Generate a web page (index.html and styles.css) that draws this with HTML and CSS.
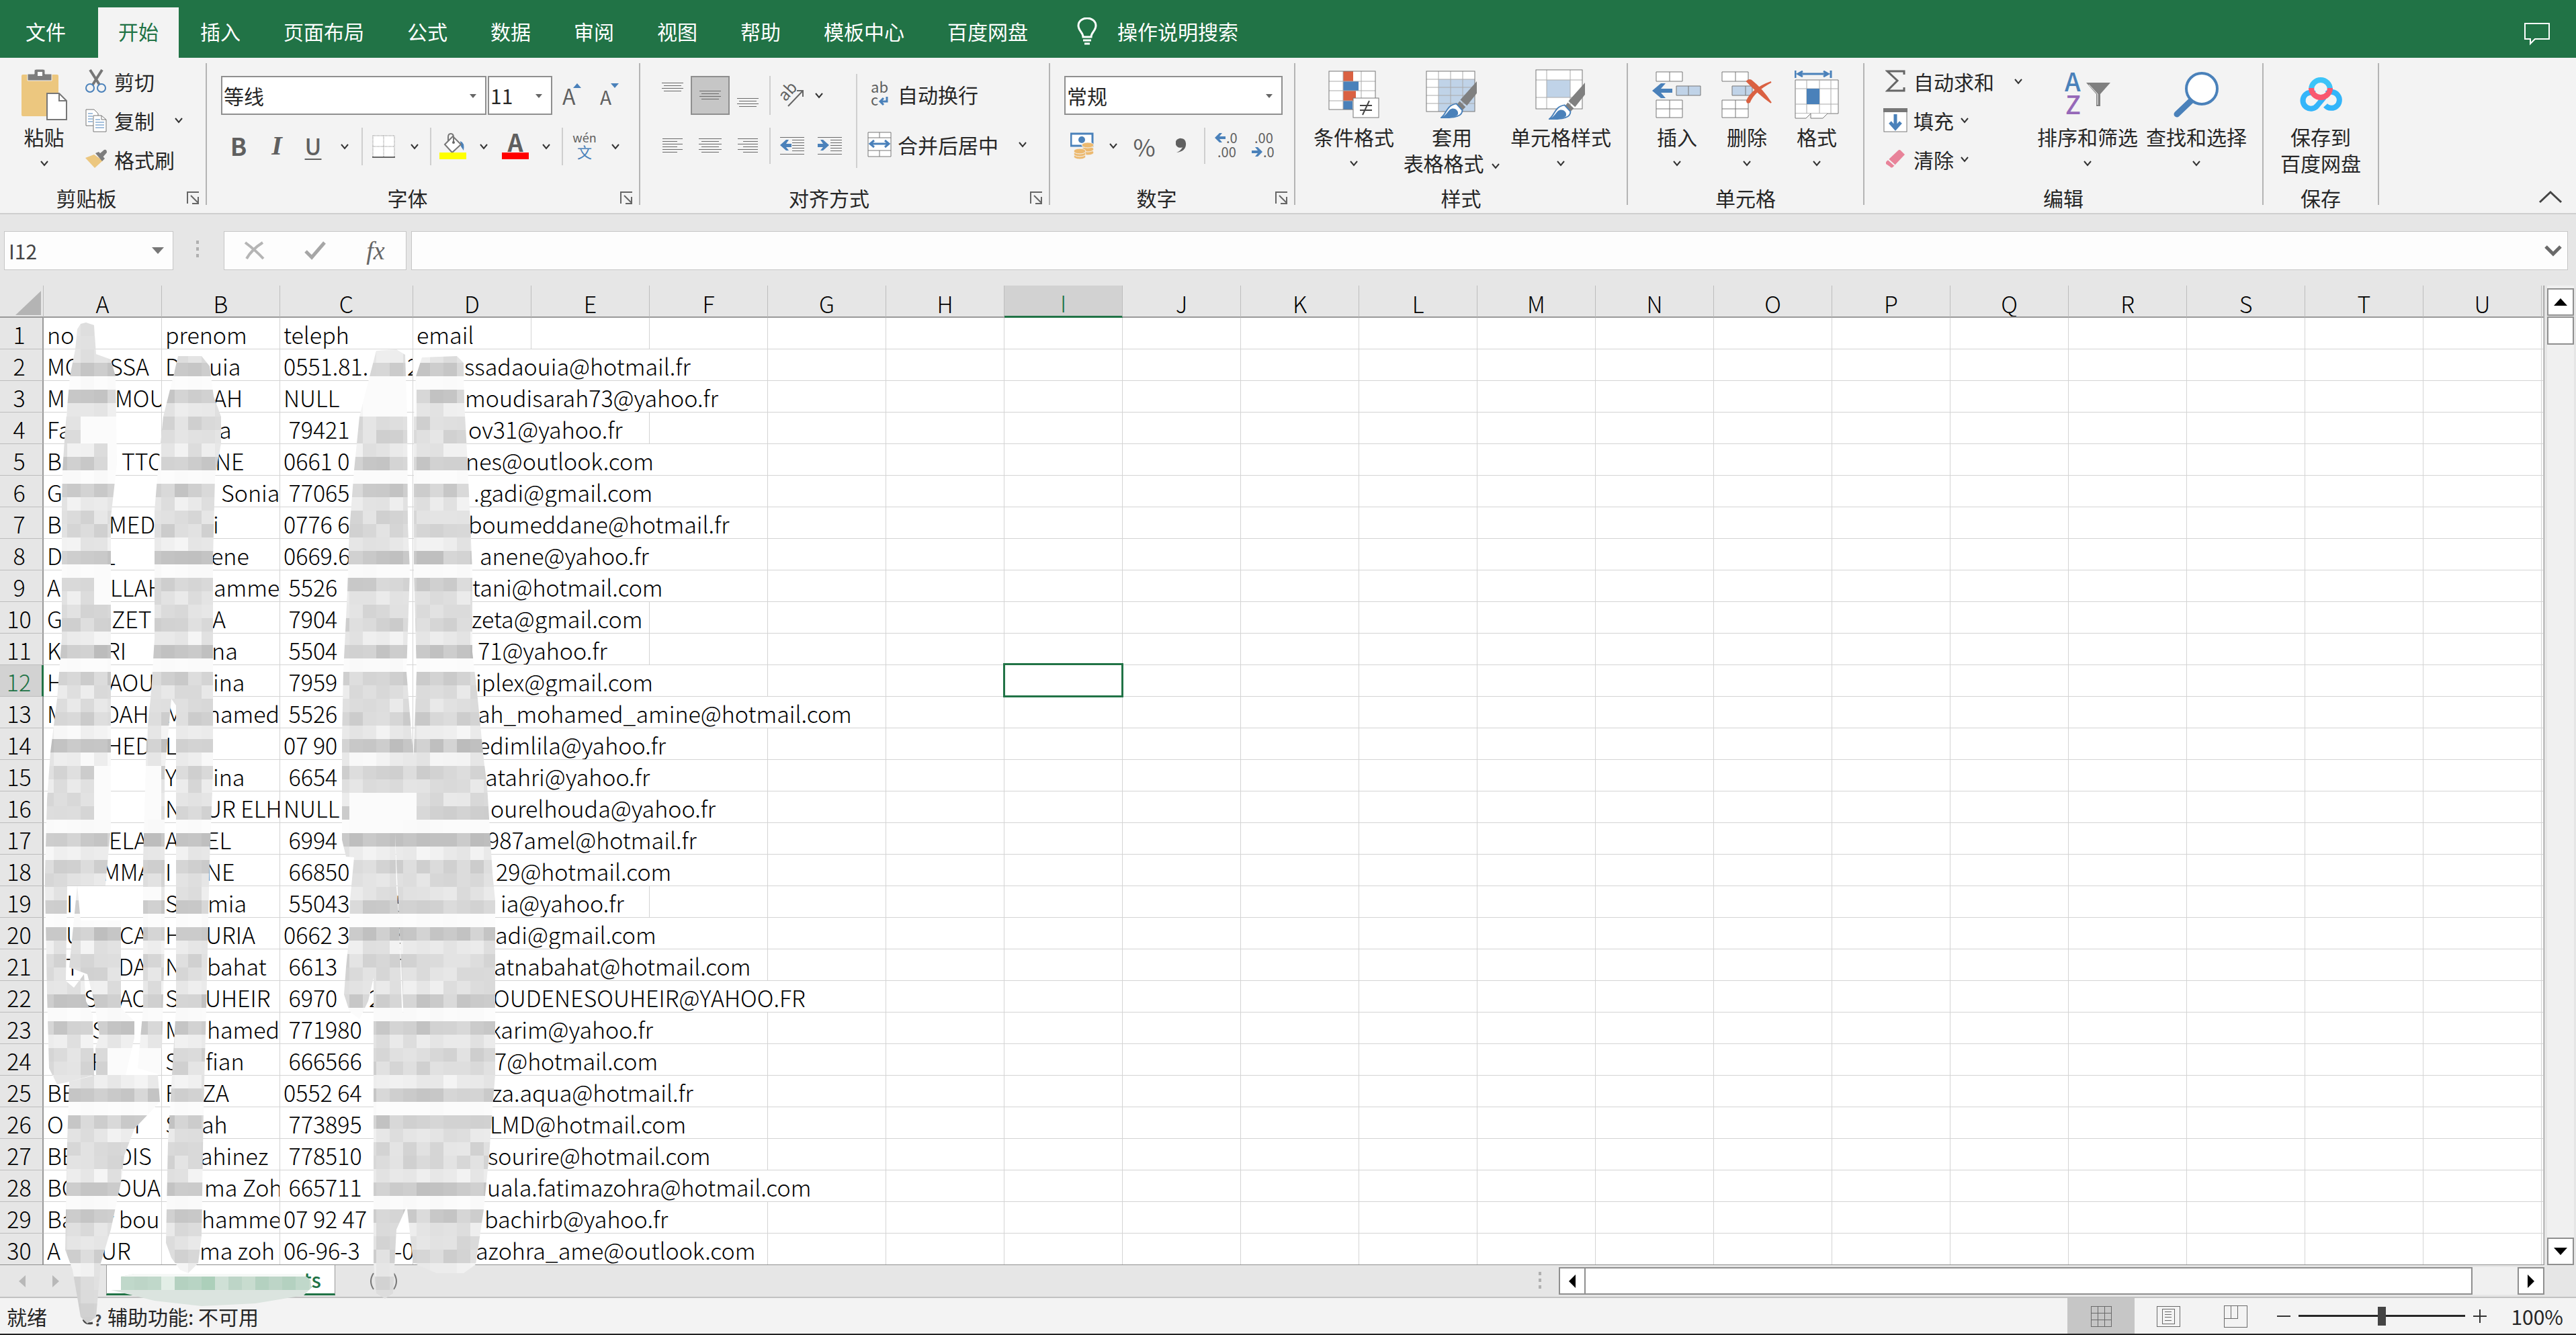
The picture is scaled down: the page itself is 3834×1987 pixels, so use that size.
FILE: index.html
```html
<!DOCTYPE html>
<html lang="zh-CN">
<head>
    <meta charset="UTF-8">
    <meta name="viewport" content="width=device-width, initial-scale=1.0">
    <title>Excel</title>
    <link rel="stylesheet" href="styles.css">
</head>
<body>
    <svg class="defs" aria-hidden="true">
        <symbol id="chev" viewBox="0 0 14 10"><path d="M2 2L7 8L12 2" fill="none" stroke="#333" stroke-width="2"/></symbol>
        <symbol id="launch" viewBox="0 0 20 20"><path d="M1 18V1H18M6 6L17 17M17 8V18H8" fill="none" stroke="#666" stroke-width="2"/></symbol>
        <symbol id="brush" viewBox="0 0 56 56">
            <path d="M55 0V18L40 37L30 28Z" fill="#808080"/>
            <path d="M29 30L38 39L33 44L25 35Z" fill="#808080"/>
            <path d="M24 34L33 44C33 52 24 56 1 55C9 50 9 36 24 34Z" fill="#fff" stroke="#4a81ba" stroke-width="2"/>
            <path d="M14 43C20 38 29 44 26 51C22 55 12 55 1 55C8 52 10 47 14 43Z" fill="#4a81ba"/>
        </symbol>
    </svg>

    <nav class="tabs">
        <button class="tab file">文件</button>
        <button class="tab active">开始</button>
        <button class="tab">插入</button>
        <button class="tab">页面布局</button>
        <button class="tab">公式</button>
        <button class="tab">数据</button>
        <button class="tab">审阅</button>
        <button class="tab">视图</button>
        <button class="tab">帮助</button>
        <button class="tab">模板中心</button>
        <button class="tab">百度网盘</button>
        <button class="tab tell">
            <svg width="30" height="42" viewBox="0 0 30 42"><path d="M9 29C9 22 2 20 2 12A13 11 0 0 1 28 12C28 20 21 22 21 29ZM9 34H21M11 39H19" fill="none" stroke="#fff" stroke-width="3"/></svg>
            操作说明搜索
        </button>
        <button class="comment" aria-label="批注">
            <svg width="38" height="34" viewBox="0 0 38 34"><path d="M1 1H37V24H16L9 31V24H1Z" fill="none" stroke="#fff" stroke-width="2"/></svg>
        </button>
    </nav>

    <div class="ribbon">
        <section class="group clipboard">
            <div class="group-body">
                <button class="big">
                    <span class="pic"><svg width="68" height="76" viewBox="39 105 68 76">
                        <rect x="39" y="113" width="55" height="62" rx="2" fill="#ecc77f"/>
                        <path d="M48 122V112H58V107Q58 105 61 105H71Q74 105 74 107V112H84V122Z" fill="#7d7d7d" stroke="#f3f3f3"/>
                        <rect x="63" y="109" width="7" height="6" fill="#fff"/>
                        <path d="M77 141H95L106 152V180H77Z" fill="#fff" stroke="#777" stroke-width="2"/>
                        <path d="M95 141V152H106" fill="none" stroke="#777" stroke-width="2"/>
                    </svg></span>
                    <span>粘贴</span>
                    <svg class="chev"><use href="#chev"/></svg>
                </button>
                <div class="stack">
                    <button class="small"><span class="ico"><svg width="32" height="36" viewBox="129 103 32 36">
                        <path d="M136 104L150 126M154 104L140 126" stroke="#777" stroke-width="4" fill="none"/>
                        <circle cx="136" cy="131" r="6" fill="#f3f3f3" stroke="#4a81ba" stroke-width="2"/><circle cx="153" cy="131" r="6" fill="#f3f3f3" stroke="#4a81ba" stroke-width="2"/>
                    </svg></span>剪切</button>
                    <button class="small"><span class="ico"><svg width="32" height="36" viewBox="129 160 32 36">
                        <path d="M130 162H142L148 168V186H130Z" fill="#fff" stroke="#777"/>
                        <path d="M133 168H140M133 172H140M133 176H140M133 180H140" stroke="#4a81ba" stroke-width="1"/>
                        <path d="M141 171H153L160 177V195H141Z" fill="#fff" stroke="#777"/>
                        <path d="M153 171V177H160" fill="none" stroke="#777"/>
                        <path d="M144 177H151M144 181H157M144 185H157M144 189H157" stroke="#4a81ba" stroke-width="1"/>
                    </svg></span>复制<svg class="chev far"><use href="#chev"/></svg></button>
                    <button class="small"><span class="ico"><svg width="34" height="30" viewBox="128 223 34 30">
                        <path d="M129 236L142 231L155 240L143 251Z" fill="#ecc77f"/>
                        <path d="M144 229L149 227L158 237L154 241Z" fill="#7d7d7d"/><path d="M150 230L157 224Q161 223 161 228L155 235Z" fill="#7d7d7d"/>
                    </svg></span>格式刷</button>
                </div>
            </div>
            <div class="group-label">剪贴板</div>
            <button class="launch" aria-label="剪贴板设置"><svg width="20" height="20"><use href="#launch"/></svg></button>
        </section>

        <section class="group font">
            <div class="group-body rows">
                <div class="row">
                    <div class="combo name"><select aria-label="字体"><option>等线</option></select></div>
                    <div class="combo size"><select aria-label="字号"><option>11</option></select></div>
                    <button class="tool grow" aria-label="增大字号"><svg width="34" height="40" viewBox="0 0 34 40"><text x="4" y="34" class="t-icon" font-size="32">A</text><path d="M20 9L26 2L32 9Z" fill="#4a81ba"/></svg></button>
                    <button class="tool grow" aria-label="减小字号"><svg width="34" height="40" viewBox="0 0 34 40"><text x="4" y="34" class="t-icon" font-size="28">A</text><path d="M20 2H32L26 9Z" fill="#4a81ba"/></svg></button>
                </div>
                <div class="row font-tools">
                    <button class="tool bold">B</button>
                    <button class="tool italic">I</button>
                    <button class="tool under">U</button>
                    <button class="tool" aria-label="下划线选项"><svg class="chev"><use href="#chev"/></svg></button>
                    <i class="sep"></i>
                    <button class="tool" aria-label="边框"><svg width="34" height="34" viewBox="0 0 34 34"><rect x="1" y="1" width="32" height="32" fill="#fff"/><path d="M1 1H33V33M1 1V33M17 1V33M1 17H33" fill="none" stroke="#777" stroke-width="1" stroke-dasharray="1 1"/><path d="M0 33H34" stroke="#666" stroke-width="2"/></svg></button>
                    <button class="tool" aria-label="边框选项"><svg class="chev"><use href="#chev"/></svg></button>
                    <i class="sep"></i>
                    <button class="tool" aria-label="填充颜色"><svg width="40" height="40" viewBox="0 0 40 40"><path d="M31 12Q38 14 36 26L32 20Z" fill="#4a81ba"/><path d="M8 17L20 5L32 17L19 29Z" fill="#fff" stroke="#777" stroke-width="2"/><path d="M13 12V6Q13 1 17 1T21 6V13" fill="none" stroke="#777" stroke-width="2"/><circle cx="21" cy="14" r="2" fill="#666"/><rect y="29" width="40" height="10" fill="#ff0"/></svg></button>
                    <button class="tool" aria-label="填充选项"><svg class="chev"><use href="#chev"/></svg></button>
                    <button class="tool" aria-label="字体颜色"><svg width="40" height="40" viewBox="0 0 40 40"><text x="20" y="28" text-anchor="middle" class="t-icon" font-size="36" font-weight="bold">A</text><rect y="29" width="40" height="10" fill="#f00"/></svg></button>
                    <button class="tool" aria-label="颜色选项"><svg class="chev"><use href="#chev"/></svg></button>
                    <i class="sep"></i>
                    <button class="tool" aria-label="拼音"><svg width="40" height="42" viewBox="0 0 40 42"><text x="20" y="15" text-anchor="middle" class="t-icon" font-size="18">wén</text><text x="20" y="38" text-anchor="middle" class="t-blue" font-size="22">文</text></svg></button>
                    <button class="tool" aria-label="拼音选项"><svg class="chev"><use href="#chev"/></svg></button>
                </div>
            </div>
            <div class="group-label">字体</div>
            <button class="launch" aria-label="字体设置"><svg width="20" height="20"><use href="#launch"/></svg></button>
        </section>

        <section class="group align">
            <div class="group-body">
                <div class="rows">
                    <div class="row align-top">
                        <button class="tool" aria-label="顶端对齐"><svg width="32" height="40"><path d="M0 1H32M3 5H29M0 9H32M3 13H29" class="ln thin"/></svg></button>
                        <button class="tool pressed" aria-label="垂直居中"><svg width="32" height="40"><path d="M0 13H32M3 17H29M0 21H32M3 25H29" class="ln thin"/></svg></button>
                        <button class="tool" aria-label="底端对齐"><svg width="32" height="40"><path d="M0 24H32M3 28H29M0 32H32M3 36H29" class="ln thin"/></svg></button>
                        <i class="sep"></i>
                        <button class="tool" aria-label="方向"><svg width="40" height="40" viewBox="0 0 40 40"><text x="10" y="30" class="t-icon" font-size="24" transform="rotate(-48 10 30)">ab</text><path d="M14 36L36 13M27 13H36V22" fill="none" stroke="#666" stroke-width="2"/></svg></button>
                        <button class="tool" aria-label="方向选项"><svg class="chev"><use href="#chev"/></svg></button>
                    </div>
                    <div class="row align-low">
                        <button class="tool" aria-label="左对齐"><svg width="30" height="26"><path d="M0 2H30M0 6H22M0 10H30M0 14H22M0 18H30M0 22H22" class="ln thin"/></svg></button>
                        <button class="tool" aria-label="居中"><svg width="34" height="26"><path d="M0 2H34M4 6H30M0 10H34M4 14H30M0 18H34M4 22H30" class="ln thin"/></svg></button>
                        <button class="tool" aria-label="右对齐"><svg width="30" height="26"><path d="M0 2H30M8 6H30M0 10H30M8 14H30M0 18H30M8 22H30" class="ln thin"/></svg></button>
                        <i class="sep"></i>
                        <button class="tool" aria-label="减少缩进"><svg width="36" height="30"><path d="M0 2H36M18 6H36M18 10H36M18 14H36M18 18H36M18 22H36M0 27H36" class="ln thin"/><path d="M0 14L9 6H13L9 12H17V17H9L13 22H9Z" fill="#4a81ba"/></svg></button>
                        <button class="tool" aria-label="增加缩进"><svg width="36" height="30"><path d="M0 2H36M19 6H36M19 10H36M19 14H36M19 18H36M19 22H36M0 27H36" class="ln thin"/><path d="M17 14L8 6H4L8 12H0V17H8L4 22H8Z" fill="#4a81ba"/></svg></button>
                    </div>
                </div>
                <i class="sep tall"></i>
                <div class="rows">
                    <button class="row small"><span class="ico"><svg width="30" height="40" viewBox="0 0 30 40"><text x="2" y="18" class="t-icon" font-size="22">ab</text><text x="2" y="37" class="t-icon" font-size="22">c</text><path d="M26 24V31H17M21 26L16 31L21 36" fill="none" stroke="#4a81ba" stroke-width="3"/></svg></span>自动换行</button>
                    <button class="row small low"><span class="ico"><svg width="36" height="38" viewBox="0 0 36 38"><path d="M1 1H35V37H1ZM18 1V9M18 28V37M1 9H35M1 28H35" fill="#fff" stroke="#777" stroke-width="1"/><path d="M4 18H32M10 13L4 18L10 23M26 13L32 18L26 23" fill="none" stroke="#4a81ba" stroke-width="3"/></svg></span>合并后居中<svg class="chev far"><use href="#chev"/></svg></button>
                </div>
            </div>
            <div class="group-label">对齐方式</div>
            <button class="launch" aria-label="对齐设置"><svg width="20" height="20"><use href="#launch"/></svg></button>
        </section>

        <section class="group number">
            <div class="group-body rows">
                <div class="row"><div class="combo format"><select aria-label="数字格式"><option>常规</option></select></div></div>
                <div class="row number-tools">
                    <button class="tool" aria-label="货币"><svg width="36" height="40" viewBox="0 0 36 40"><rect x="1" y="2" width="32" height="18" fill="#fff" stroke="#4a81ba" stroke-width="3"/><ellipse cx="17" cy="11" rx="5" ry="5" fill="#4a81ba"/><g fill="#ecb96f" stroke="#f3f3f3"><ellipse cx="26" cy="30" rx="9" ry="4"/><ellipse cx="26" cy="25" rx="9" ry="4"/><ellipse cx="26" cy="19" rx="9" ry="4"/><ellipse cx="14" cy="36" rx="9" ry="4"/><ellipse cx="14" cy="32" rx="9" ry="4"/><ellipse cx="14" cy="28" rx="9" ry="4"/></g></svg></button>
                    <button class="tool" aria-label="货币选项"><svg class="chev"><use href="#chev"/></svg></button>
                    <button class="tool percent">%</button>
                    <button class="tool" aria-label="千位分隔"><svg width="16" height="24"><path d="M8 1A7 7 0 1 0 10 14Q8 19 1 22Q16 20 15 8Q14 1 8 1Z" fill="#606060"/></svg></button>
                    <i class="sep"></i>
                    <button class="tool" aria-label="增加小数位"><svg width="38" height="40" viewBox="0 0 38 40"><text x="18" y="16" class="t-icon" font-size="20">.0</text><text x="5" y="37" class="t-icon" font-size="20">.00</text><path d="M1 8L8 1H12L8 6H17V10H8L12 15H8Z" fill="#4a81ba"/></svg></button>
                    <button class="tool" aria-label="减少小数位"><svg width="38" height="40" viewBox="0 0 38 40"><text x="5" y="16" class="t-icon" font-size="20">.00</text><text x="18" y="37" class="t-icon" font-size="20">.0</text><path d="M17 29L10 22H6L10 27H1V31H10L6 36H10Z" fill="#4a81ba"/></svg></button>
                </div>
            </div>
            <div class="group-label">数字</div>
            <button class="launch" aria-label="数字设置"><svg width="20" height="20"><use href="#launch"/></svg></button>
        </section>

        <section class="group styles">
            <div class="group-body">
                <button class="big w-cond">
                    <span class="pic"><svg width="76" height="72" viewBox="0 0 76 72">
                        <rect x="1" y="1" width="69" height="57" fill="#fff"/>
                        <rect x="22" y="1" width="15" height="15" fill="#da6142"/><rect x="22" y="16" width="23" height="14" fill="#4a81ba"/><rect x="22" y="30" width="19" height="15" fill="#da6142"/><rect x="22" y="45" width="14" height="13" fill="#4a81ba"/>
                        <path d="M1 16H70M1 30H70M1 45H70M22 1V58M49 1V58" stroke="#aaa"/><rect x="1" y="1" width="69" height="57" fill="none" stroke="#777"/>
                        <rect x="37" y="41" width="38" height="29" fill="#fff" stroke="#777"/><path d="M47 52H65M47 59H65M61 45L51 66" stroke="#444" stroke-width="2"/>
                    </svg></span>
                    <span>条件格式</span>
                    <svg class="chev"><use href="#chev"/></svg>
                </button>
                <button class="big w-table">
                    <span class="pic"><svg width="78" height="72" viewBox="0 0 78 72">
                        <rect x="1" y="1" width="72" height="60" fill="#fff"/><rect x="19" y="13" width="54" height="48" fill="#c0d3e8"/>
                        <path d="M1 13H73M1 25H73M1 37H73M1 49H73M19 1V61M37 1V61M55 1V61" stroke="#aaa"/><rect x="1" y="1" width="72" height="60" fill="none" stroke="#777"/>
                        <use href="#brush" x="22" y="16" width="55" height="55"/>
                    </svg></span>
                    <span>套用</span>
                    <span>表格格式 <svg class="chev"><use href="#chev"/></svg></span>
                </button>
                <button class="big w-cell">
                    <span class="pic"><svg width="76" height="76" viewBox="0 0 76 76">
                        <rect x="1" y="1" width="69" height="58" fill="#fff"/><rect x="17" y="16" width="35" height="26" fill="#c0d3e8"/>
                        <path d="M1 16H70M1 42H70M17 1V59M52 1V59" stroke="#aaa"/><rect x="1" y="1" width="69" height="58" fill="none" stroke="#777"/>
                        <use href="#brush" x="20" y="20" width="55" height="55"/>
                    </svg></span>
                    <span>单元格样式</span>
                    <svg class="chev"><use href="#chev"/></svg>
                </button>
            </div>
            <div class="group-label">样式</div>
        </section>

        <section class="group cells">
            <div class="group-body">
                <button class="big w-op">
                    <span class="pic"><svg width="74" height="70" viewBox="0 0 74 70">
                        <path d="M6 1H45V15H6ZM26 1V15M6 43H45V69H6ZM26 43V69M6 56H45" fill="#fff" stroke="#777"/>
                        <path d="M36 22H72V36H36ZM54 22V36" fill="#c0d3e8" stroke="#777"/>
                        <path d="M0 29L13 18H20L13 26H30V32H13L20 40H13Z" fill="#4a81ba"/>
                    </svg></span>
                    <span>插入</span>
                    <svg class="chev"><use href="#chev"/></svg>
                </button>
                <button class="big w-op">
                    <span class="pic"><svg width="76" height="70" viewBox="0 0 76 70">
                        <path d="M1 1H40V15H1ZM21 1V15M1 43H40V69H1ZM21 43V69M1 56H40" fill="#fff" stroke="#777"/>
                        <path d="M16 22H46V36H16ZM36 22V36" fill="#c0d3e8" stroke="#777"/>
                        <path d="M38 15Q42 11 46 15Q60 26 74 47Q56 34 38 15ZM74 16Q48 30 42 46Q38 48 38 44Q46 26 74 16Z" fill="#da6142" stroke="#da6142" stroke-width="2"/>
                    </svg></span>
                    <span>删除</span>
                    <svg class="chev"><use href="#chev"/></svg>
                </button>
                <button class="big w-op">
                    <span class="pic"><svg width="66" height="74" viewBox="0 0 66 74">
                        <path d="M1 1V12M54 1V12M6 6H49M12 2L5 6L12 10M43 2L50 6L43 10" fill="none" stroke="#4a81ba" stroke-width="3"/>
                        <path d="M1 15H65V65H1Z" fill="#fff" stroke="#777"/><path d="M1 28H65M1 51H65M18 15V65M37 15V65M54 15V65" stroke="#aaa"/>
                        <rect x="18" y="28" width="19" height="23" fill="#4a81ba"/><path d="M1 65V72H17L24 65M24 65V72H42L49 65" fill="#fff" stroke="#777"/>
                    </svg></span>
                    <span>格式</span>
                    <svg class="chev"><use href="#chev"/></svg>
                </button>
            </div>
            <div class="group-label">单元格</div>
        </section>

        <section class="group edit">
            <div class="group-body">
                <div class="stack">
                    <button class="small"><span class="ico"><svg width="30" height="34"><path d="M28 7V2H3L18 16L3 31H28V26" fill="none" stroke="#666" stroke-width="3"/></svg></span>自动求和<svg class="chev far"><use href="#chev"/></svg></button>
                    <button class="small"><span class="ico"><svg width="36" height="36"><rect x="1" y="1" width="34" height="34" fill="#fff" stroke="#777"/><rect width="36" height="6" fill="#777"/><path d="M18 9V29M10 21L18 30L26 21" fill="none" stroke="#4a81ba" stroke-width="5"/></svg></span>填充<svg class="chev"><use href="#chev"/></svg></button>
                    <button class="small"><span class="ico"><svg width="30" height="30"><path d="M1 19L19 2Q21 0 23 2L29 8L12 26Q9 29 7 26L1 22Z" fill="#e88399"/><path d="M4 15L14 24" stroke="#f3f3f3" stroke-width="2"/></svg></span>清除<svg class="chev"><use href="#chev"/></svg></button>
                </div>
                <button class="big w-find">
                    <span class="pic"><svg width="68" height="66" viewBox="0 0 68 66"><text x="0" y="28" class="t-blue" font-size="38" font-weight="500">A</text><text x="1" y="62" fill="#9668b8" font-size="38" font-weight="500">Z</text><path d="M32 15H68L53 32V50H47V32Z" fill="#808080"/><path d="M36 18L49 32V48" fill="none" stroke="#fff"/></svg></span>
                    <span>排序和筛选</span>
                    <svg class="chev"><use href="#chev"/></svg>
                </button>
                <button class="big w-find">
                    <span class="pic"><svg width="68" height="70" viewBox="0 0 68 70"><path d="M28 42L5 64" stroke="#4a81ba" stroke-width="9" stroke-linecap="round"/><circle cx="42" cy="26" r="23" fill="#fff" stroke="#4a81ba" stroke-width="4"/></svg></span>
                    <span>查找和选择</span>
                    <svg class="chev"><use href="#chev"/></svg>
                </button>
            </div>
            <div class="group-label">编辑</div>
        </section>

        <section class="group save">
            <div class="group-body">
                <button class="big">
                    <span class="pic"><svg width="66" height="56" viewBox="0 0 66 56" fill="none" stroke-width="8"><path d="M38 32L28 44A12 12 0 1 1 24 26M40 44A12 12 0 1 0 42 26" stroke="#33b5fa"/><path d="M19 20A14 14 0 0 1 47 20" stroke="#3cc4f8"/><path d="M47 18A14 14 0 1 1 19 18" stroke="#f9586f"/></svg></span>
                    <span>保存到</span>
                    <span>百度网盘</span>
                </button>
            </div>
            <div class="group-label">保存</div>
        </section>
        <button class="collapse" aria-label="折叠功能区"><svg width="36" height="20"><path d="M2 18L18 3L34 18" fill="none" stroke="#444" stroke-width="3"/></svg></button>
    </div>

    <div class="formula-bar">
        <div class="combo-name"><input type="text" value="I12" aria-label="名称框"></div>
        <i class="dots"></i>
        <div class="fx">
            <button aria-label="取消"><svg width="32" height="28"><path d="M2 2Q18 14 29 26M28 2Q12 12 4 26" fill="none" stroke="#b5b5b5" stroke-width="4"/></svg></button>
            <button aria-label="输入"><svg width="32" height="28"><path d="M2 15L11 24L30 2" fill="none" stroke="#a6a6a6" stroke-width="5"/></svg></button>
            <button class="fn">fx</button>
        </div>
        <div class="formula"><input type="text" aria-label="编辑栏"><svg width="26" height="18"><path d="M2 3L13 14L24 3" fill="none" stroke="#6a6a6a" stroke-width="5"/></svg></div>
    </div>

    <main class="workbook">
        <div class="grid"><table id="sheet"></table></div>
        <div class="vscroll">
            <button aria-label="向上"><svg width="20" height="12"><path d="M0 11L10 0L20 11Z"/></svg></button>
            <div class="vthumb"></div>
            <button class="end" aria-label="向下"><svg width="20" height="12"><path d="M0 0L10 11L20 0Z"/></svg></button>
        </div>
    </main>

    <div class="sheet-bar">
        <button class="nav" aria-label="上一张"><svg width="10" height="18"><path d="M10 0L0 9L10 18Z"/></svg></button>
        <button class="nav" aria-label="下一张"><svg width="10" height="18"><path d="M0 0L10 9L0 18Z"/></svg></button>
        <button class="sheet-tab">ts</button>
        <button class="add" aria-label="新工作表"><svg width="44" height="32"><path d="M6 4Q-2 16 6 28M36 4Q44 16 36 28" fill="none" stroke="#777" stroke-width="2"/></svg></button>
        <i class="dots"></i>
        <div class="hscroll">
            <button aria-label="向左"><svg width="10" height="20"><path d="M10 0L0 10L10 20Z"/></svg></button>
            <div class="hthumb"></div>
            <button class="end" aria-label="向右"><svg width="10" height="20"><path d="M0 0L10 10L0 20Z"/></svg></button>
        </div>
    </div>

    <footer class="status">
        <span>就绪</span>
        <span class="access"><svg width="34" height="34"><path d="M2 22Q6 30 16 27" fill="none" stroke="#444" stroke-width="3"/><text x="18" y="32" font-size="22" font-weight="bold" fill="#444">?</text></svg>辅助功能: 不可用</span>
        <div class="views">
            <button class="on" aria-label="普通"><svg width="32" height="32"><path d="M1 1H31V31H1ZM11 1V31M21 1V31M1 11H31M1 21H31" class="ln thin"/></svg></button>
            <button aria-label="页面布局"><svg width="36" height="32"><path d="M1 1H35V31H1ZM9 5H27V27H9ZM13 9H23M13 13H23M13 17H23M13 22H23" class="ln thin"/></svg></button>
            <button aria-label="分页预览"><svg width="36" height="34"><path d="M1 1H35V33H1ZM1 20H21V1M11 1V20" class="ln thin"/></svg></button>
        </div>
        <button class="zoom-btn" aria-label="缩小"><svg width="20" height="20"><path d="M0 10H20" stroke="#333" stroke-width="2"/></svg></button>
        <input type="range" min="0" max="100" value="50" aria-label="缩放">
        <button class="zoom-btn" aria-label="放大"><svg width="20" height="20"><path d="M0 10H20M10 0V20" stroke="#333" stroke-width="2"/></svg></button>
        <span class="percent-label">100%</span>
    </footer>

    <svg class="mosaic" id="mosaic" aria-hidden="true"></svg>
    <script src="sheet.js"></script>
</body>
</html>
```
FILE: styles.css
```css
* {
    box-sizing: border-box;
}

html, body {
    height: 100%;
    margin: 0;
}

body {
    position: relative;
    display: flex;
    flex-direction: column;
    overflow: hidden;
    background: #e6e6e6;
    color: #262626;
    font-family: "Noto Sans CJK SC", sans-serif;
    font-size: 30px;
}

button, input, select {
    margin: 0;
    padding: 0;
    border: none;
    background: none;
    color: inherit;
    font: inherit;
}

svg {
    display: block;
    flex: none;
}

.defs {
    position: absolute;
    width: 0;
    height: 0;
}

/* tabs */
.tabs {
    display: flex;
    align-items: flex-end;
    height: 86px;
    flex: none;
    background: #217346;
    color: #fff;
}

.tab {
    height: 75px;
    padding: 0 32px 4px;
    line-height: 71px;
    white-space: nowrap;
}

.tab.file {
    width: 146px;
    padding: 0 48px 4px 38px;
}

.tab.active {
    padding: 0 30px 4px;
    background: #f3f3f3;
    color: #217346;
}

.tab.tell {
    display: flex;
    align-items: center;
    gap: 30px;
    margin-left: 9px;
}

.comment {
    margin: 0 39px 18px auto;
}

/* ribbon */
.ribbon {
    display: flex;
    flex: none;
    height: 233px;
    padding: 8px 0 12px;
    background: #f3f3f3;
    border-bottom: 2px solid #cfcfcf;
}

.group {
    position: relative;
    flex: none;
    padding-left: 21px;
    border-right: 2px solid #b4b4b4;
}

.group-body {
    display: flex;
    height: 180px;
}

.group-label {
    height: 33px;
    margin-left: -21px;
    padding-right: 46px;
    line-height: 40px;
    text-align: center;
}

.clipboard { width: 308px; padding-left: 18px; }
.font { width: 645px; }
.align { width: 610px; }
.number { width: 365px; }
.styles { width: 495px; }
.cells { width: 352px; }
.edit { width: 594px; }
.save { width: 172px; padding-left: 0; }

.styles .group-label,
.cells .group-label,
.edit .group-label {
    padding-right: 0;
}

.save .group-label {
    margin-left: 0;
    padding-right: 0;
}

.launch {
    position: absolute;
    right: 8px;
    bottom: 0;
}

.chev {
    display: inline-block;
    width: 14px;
    height: 10px;
    flex: none;
}

.big {
    display: flex;
    flex-direction: column;
    align-items: center;
    width: 95px;
    line-height: 39px;
    white-space: nowrap;
}

.big .pic {
    display: flex;
    align-items: center;
    justify-content: center;
    height: 90px;
    padding-top: 4px;
}

.big > .chev {
    margin-top: 15px;
}

.big span .chev {
    margin-left: 4px;
    vertical-align: middle;
}

.w-cond { width: 132px; }
.w-table { width: 160px; }
.w-cell { width: 164px; }
.w-op { width: 104px; }
.w-find { width: 162px; }
.save .big { width: 100%; }

.stack {
    display: flex;
    flex-direction: column;
    padding-left: 12px;
}

.small {
    display: flex;
    align-items: center;
    gap: 9px;
    height: 58px;
    padding-bottom: 4px;
    white-space: nowrap;
}

.small .ico {
    display: flex;
    justify-content: center;
    width: 36px;
}

.small .far {
    margin-left: 20px;
}

.edit .stack {
    width: 230px;
    padding-left: 7px;
}

.rows {
    display: flex;
    flex-direction: column;
    gap: 19px;
    padding-top: 19px;
}

.row {
    display: flex;
    flex: none;
    height: 58px;
}

.font-tools,
.align-low,
.align-top,
.number-tools {
    display: grid;
    height: 54px;
}

.align-top { grid-template-columns: 54px 58px 54px 12px 54px 26px; height: 58px; }
.align-low { grid-template-columns: 54px 58px 54px 12px 54px 58px; }
.font-tools { grid-template-columns: 52px 62px 46px 48px 4px 60px 32px 16px 50px 42px 52px 40px 8px 58px 34px; }
.number-tools { grid-template-columns: 54px 38px 54px 56px 14px 52px 58px; }

.low {
    height: 54px;
}

.tool {
    display: flex;
    align-items: center;
    justify-content: center;
    color: #5f5f5f;
}

.pressed {
    background: #c6c6c6;
    border: 2px solid #8f8f8f;
}

.bold {
    padding-bottom: 4px;
    font-size: 36px;
    font-weight: bold;
}

.italic {
    padding-bottom: 4px;
    font-family: "Liberation Serif", serif;
    font-size: 40px;
    font-style: italic;
    font-weight: bold;
}

.under {
    padding-bottom: 4px;
    font-size: 34px;
    font-weight: 500;
    text-decoration: underline;
    text-decoration-thickness: 2px;
    text-underline-offset: 5px;
}

.percent {
    font-size: 36px;
}

.grow {
    width: 56px;
}

.sep {
    width: 2px;
    justify-self: center;
    background: #cfcfcf;
}

.sep.tall {
    height: 140px;
    margin: 16px 15px 0 10px;
}

.combo {
    position: relative;
    height: 58px;
    border: 2px solid #8f8f8f;
    background: #fff;
}

.combo select {
    width: 100%;
    height: 100%;
    padding-left: 2px;
    appearance: none;
    color: #262626;
}

.combo::after {
    content: "";
    position: absolute;
    right: 13px;
    top: 25px;
    border: 5px solid transparent;
    border-top: 6px solid #666;
    border-bottom: none;
}

.combo.name { width: 395px; }
.combo.size { width: 96px; margin-left: 2px; }
.combo.format { width: 325px; }

.collapse {
    align-self: flex-end;
    margin: 0 20px 2px auto;
}

.t-icon { fill: #5f5f5f; }
.t-blue { fill: #4a81ba; }

.ln {
    fill: none;
    stroke: #6a6a6a;
    stroke-width: 2px;
    shape-rendering: crispEdges;
}

.ln.thin {
    stroke-width: 1px;
}

/* formula bar */
.formula-bar {
    display: flex;
    flex: none;
    height: 106px;
    padding: 25px 12px 23px 6px;
}

.combo-name, .fx, .formula {
    display: flex;
    align-items: center;
    border: 1px solid #c6c6c6;
    background: #fdfdfd;
}

.combo-name {
    width: 252px;
    padding: 0 13px 0 6px;
}

.combo-name input {
    width: 100%;
    min-width: 0;
    color: #444;
}

.combo-name::after {
    content: "";
    border: 9px solid transparent;
    border-top: 10px solid #777;
    border-bottom: none;
}

.dots {
    width: 4px;
    height: 28px;
    background: repeating-linear-gradient(#b0b0b0 0 5px, transparent 5px 10px);
}

.formula-bar .dots {
    margin: 14px 37px 0 34px;
}

.fx {
    width: 272px;
}

.fx button {
    display: flex;
    align-items: center;
    justify-content: center;
    width: 90px;
    height: 100%;
}

.fx .fn {
    color: #666;
    font-family: "Liberation Serif", serif;
    font-size: 38px;
    font-style: italic;
}

.formula {
    flex: 1;
    margin-left: 7px;
    padding-right: 8px;
}

.formula input {
    flex: 1;
}

/* cells */
.workbook {
    display: flex;
    flex: 1;
    min-height: 0;
}

.grid {
    flex: 1;
    min-width: 0;
    overflow: hidden;
    background: #fff;
    border-right: 1px solid #999;
    border-bottom: 1px solid #8f8f8f;
}

#sheet {
    width: 100%;
    table-layout: fixed;
    border-collapse: separate;
    border-spacing: 0;
    color: #000;
    font-size: 34px;
    font-weight: 300;
}

#sheet .c-head { width: 65px; }
#sheet .c-wide { width: 198px; }
#sheet .c-col { width: 176px; }

#sheet th {
    height: 47px;
    padding: 4px 0 0;
    overflow: hidden;
    background: #e6e6e6;
    border-right: 1px solid #bdbdbd;
    border-bottom: 1px solid #bdbdbd;
    font-weight: 300;
    line-height: 42px;
}

#sheet thead th {
    height: 48px;
    padding-top: 6px;
    border-bottom: 2px solid #999;
    line-height: 39px;
}

#sheet tbody th {
    padding-right: 6px;
    border-right: 2px solid #999;
}

#sheet thead th.on,
#sheet tbody th.on {
    background: #d2d2d2;
    color: #217346;
}

#sheet thead th.on {
    border-bottom: 3px solid #217346;
}

#sheet tbody th.on {
    border-right: 3px solid #217346;
}

#sheet td {
    height: 47px;
    padding: 4px 0 0 5px;
    overflow: hidden;
    border-right: 1px solid #d4d4d4;
    border-bottom: 1px solid #d4d4d4;
    line-height: 42px;
    white-space: pre;
}

#sheet td.picked {
    position: relative;
    overflow: visible;
}

#sheet td.picked::after {
    content: "";
    position: absolute;
    inset: -3px -2px -2px -2px;
    border: 3px solid #217346;
}

.frag {
    display: inline-block;
    height: 42px;
    vertical-align: top;
}

.corner {
    width: 0;
    height: 0;
    margin: 0 3px 0 auto;
    border-left: 38px solid transparent;
    border-bottom: 36px solid #b4b4b4;
}

/* scrollbars */
.vscroll {
    display: flex;
    flex-direction: column;
    width: 47px;
    padding: 4px 3px 0 4px;
    background: linear-gradient(#f0f0f0, #f0f0f0) 4px 0 / 40px 100% no-repeat #e6e6e6;
}

.vscroll button, .hscroll button {
    display: flex;
    align-items: center;
    justify-content: center;
    flex: none;
    width: 40px;
    height: 41px;
    border: 2px solid #8f8f8f;
    background: #fff;
}

.vthumb {
    height: 42px;
    margin-top: 1px;
    border: 2px solid #8f8f8f;
    background: #fff;
}

.vscroll .end {
    margin-top: auto;
}

.sheet-bar {
    display: flex;
    align-items: center;
    flex: none;
    height: 49px;
    padding-right: 47px;
    border-bottom: 2px solid #c2c2c2;
}

.nav {
    width: 40px;
    margin-left: 10px;
    padding-left: 18px;
    fill: #b8b8b8;
}

.sheet-tab {
    align-self: flex-start;
    width: 341px;
    height: 45px;
    margin-left: 58px;
    padding-right: 20px;
    background: #fff;
    border: 1px solid #999;
    border-top: none;
    border-bottom: 3px solid #217346;
    color: #217346;
    font-weight: 500;
    line-height: 40px;
    text-align: right;
}

.add {
    margin-left: 51px;
}

.sheet-bar .dots {
    margin-left: auto;
}

.hscroll {
    display: flex;
    width: 38.75%;
    margin-left: 26px;
    background: #f0f0f0;
}

.hthumb {
    flex: 1;
    margin-right: 67px;
    border: 2px solid #8f8f8f;
    border-left: none;
    background: #fff;
}

/* status bar */
.status {
    display: flex;
    align-items: center;
    flex: none;
    height: 55px;
    padding: 0 19px 0 10px;
    background: #f3f3f3;
    border-bottom: 2px solid #222;
    font-size: 30px;
}

.access {
    display: flex;
    align-items: center;
    gap: 4px;
    margin-left: 52px;
}

.views {
    display: flex;
    height: 100%;
    margin-left: auto;
}

.views button {
    display: flex;
    align-items: center;
    justify-content: center;
    width: 100px;
}

.views .on {
    background: #c6c6c6;
}

.zoom-btn {
    width: 20px;
    margin: 0 12px;
}

.status input {
    width: 248px;
    height: 28px;
    appearance: none;
    background: linear-gradient(#262626, #262626) center / 100% 3px no-repeat;
}

.status input::-webkit-slider-thumb {
    width: 12px;
    height: 28px;
    appearance: none;
    background: #444;
}

.percent-label {
    width: 82px;
    margin-left: 20px;
    text-align: right;
}

/* pixelated strokes lying over the personal data */
.mosaic {
    position: absolute;
    left: 0;
    top: 0;
    width: 100%;
    height: 100%;
    pointer-events: none;
    shape-rendering: crispEdges;
}
```
FILE: sheet.js
```js
// A cell is "text|width|text...": each width is the space its text takes up
// before the next piece starts. Last value: how many columns column D covers.
const rows = [
    ["no", "prenom", "teleph", "email", 1],
    ["MC|93|SSA", "D|65|uia", "0551.81.|184|2", "|71|ssadaouia@hotmail.fr", 3],
    ["M|101|MOU", "|71|AH", "NULL", "|72|moudisarah73@yahoo.fr", 3],
    ["Fa", "|80|a", " 79421", "|77|ov31@yahoo.fr", 2],
    ["B|49|N|62|TTO", "|74|NE", "0661 0", "|73|nes@outlook.com", 3],
    ["G|51|d", "|83|Sonia", " 77065", "|85|.gadi@gmail.com", 3],
    ["B|92|MEDD", "|71|i", "0776 6", "|77|boumeddane@hotmail.fr", 3],
    ["D|84|L", "|68|ene", "0669.6", "|94|anene@yahoo.fr", 3],
    ["A|94|LLAH", "|72|amme", " 5526", "r|83|tani@hotmail.com", 3],
    ["G|96|ZET", "|70|A", " 7904", "|82|zeta@gmail.com", 2],
    ["K|88|RI", "|69|na", " 5504", "|91|71@yahoo.fr", 2],
    ["H|92|AOU", "|71|ina", " 7959", "|88|iplex@gmail.com", 3],
    ["M|85|DAH", "M|62|hamed", " 5526", "|91|ah_mohamed_amine@hotmail.com", 4],
    ["|88|HED", "L|54|a", "07 90", "|91|edimlila@yahoo.fr", 3],
    ["", "Y|71|ina", " 6654", "|102|atahri@yahoo.fr", 3],
    ["", "N|60|UR ELH", "NULL", "|110|ourelhouda@yahoo.fr", 3],
    ["|92|ELA", "A|61|EL", " 6994", "|49|e|56|987amel@hotmail.fr", 3],
    ["|82|MMA", "I|60|NE", " 66850", "|45|e|73|29@hotmail.com", 3],
    ["|29|I", "S|63|mia", " 55043|166|5", "|43|s|82|ia@yahoo.fr", 2],
    ["|28|U|80|CA", "H|60|URIA", "0662 3|166|8", "|117|adi@gmail.com", 3],
    ["|28|T|78|DA", "N|62|bahat", " 6613|170|7", "|115|atnabahat@hotmail.com", 3],
    ["|55|S|52|AO", "S|59|UHEIR", " 6970|127|2", "|114|OUDENESOUHEIR@YAHOO.FR", 4],
    ["|67|S", "M|62|hamed", " 771980", "|108|karim@yahoo.fr", 3],
    ["|66|R", "S|60|fian", " 666566", "|116|7@hotmail.com", 3],
    ["BE|68|D", "F|55|ZA", "0552 64", "|112|za.aqua@hotmail.fr", 3],
    ["O|72|I|40|M", "S|54|ah", " 773895", "|109|LMD@hotmail.com", 3],
    ["BE|104|DIS", "|52|ahinez", " 778510", "|106|sourire@hotmail.com", 3],
    ["BO|101|OUA", "|58|ma Zoh", " 665711", "|105|uala.fatimazohra@hotmail.com", 4],
    ["Ba|87|r bou", "|54|hamme", "07 92 47", "|101|bachirb@yahoo.fr", 3],
    ["A|80|UR", "|51|ma zoh", "06-96-3|165|-0", "|88|azohra_ame@outlook.com", 3]
];
const letters = "ABCDEFGHIJKLMNOPQRSTU".split("");

function cell(text) {
    const parts = text.split("|");
    let html = "";
    for (let i = 0; i < parts.length; i += 2) {
        html += parts[i + 1]
            ? `<span class="frag" style="width:${parts[i + 1]}px">${parts[i]}</span>`
            : parts[i];
    }
    return html;
}

let html = '<colgroup><col class="c-head">';
letters.forEach(l => html += `<col class="${l === "C" ? "c-wide" : "c-col"}">`);
html += '<col></colgroup><thead><tr><th><div class="corner"></div></th>';
letters.forEach(l => html += `<th class="${l === "I" ? "on" : ""}">${l}</th>`);
html += "<th></th></tr></thead><tbody>";
rows.forEach((row, r) => {
    html += `<tr><th class="${r === 11 ? "on" : ""}">${r + 1}</th>`;
    for (let c = 0; c < 3; c++) html += `<td>${cell(row[c])}</td>`;
    html += `<td colspan="${row[4]}">${cell(row[3])}</td>`;
    for (let c = 3 + row[4]; c < 22; c++) {
        html += r === 11 && c === 8 ? '<td class="picked"></td>' : "<td></td>";
    }
    html += "</tr>";
});
document.getElementById("sheet").innerHTML = html + "</tbody>";

// Mosaic: 20px blocks, darker where a line of text runs below them
const strokes = [
    "112,520 115,490 120,482 128,480 140,484 143,527 165,535 172,560 174,690 165,770 165,1230 157,1318 67,1318 67,1300 70,1190 75,1120 85,1040 92,950 92,750 93,700 97,640 104,560",
    "67,1318 100,1318 98,1460 110,1470 125,1450 128,1490 138,1510 140,1600 103,1610 85,1614 73,1590 70,1480",
    "115,1318 120,1370 180,1370 180,1500 200,1520 200,1545 187,1600 235,1600 238,1640 200,1680 185,1720 180,1760 165,1830 150,1880 143,1960 130,1970 120,1960 108,1890 97,1860 100,1700 103,1610 143,1600 142,1560 148,1540 140,1490 130,1450 103,1440",
    "258,560 265,530 300,530 312,545 318,590 329,620 329,660 320,710 317,830 317,1150 312,1280 307,1500 303,1650 300,1840 295,1880 280,1895 268,1890 255,1872 247,1850 250,1700 262,1500 262,1050 255,1040 245,1150 245,1400 240,1600 205,1590 213,1500 213,1280 218,1100 225,1030 230,950 230,760 235,700 243,620",
    "560,522 590,520 603,528 606,620 607,780 610,850 605,1000 613,1100 620,1165 620,1240 588,1240 590,1320 594,1370 598,1500 608,1540 608,1790 590,1830 585,1925 573,1933 560,1925 556,1880 556,1455 548,1490 535,1517 520,1505 512,1480 515,1440 520,1390 521,1340 527,1276 515,1275 509,1250 509,1100 511,1000 517,880 520,790 527,700 535,620 545,580",
    "619,560 628,532 680,530 690,540 691,600 696,690 700,780 703,850 703,970 710,1030 720,1130 725,1170 730,1250 733,1300 737,1340 737,1600 733,1650 728,1720 720,1800 708,1882 690,1895 650,1895 615,1880 605,1790 600,1500 594,1370 588,1240 612,1230 620,1000 616,850 616,620"
];
// blocks over empty cells stay nearly white
const pale = [[120, 614, 180, 655], [160, 661, 240, 700], [140, 840, 180, 900], [140, 1131, 240, 1175], [140, 1180, 240, 1220],
    [120, 1320, 240, 1340], [540, 567, 610, 614], [509, 1179, 618, 1226], [160, 1556, 240, 1594]];

function shade(x, y) {
    const n = Math.sin(x * 12.9898 + y * 78.233) * 43758.5453;
    const rnd = n - Math.floor(n);
    if (y > 1880) return 205 + Math.round(rnd * 20);
    if (y < 520) return 222 + Math.round(rnd * 8);
    if (pale.some(p => x >= p[0] && x < p[2] && y + 10 >= p[1] && y + 10 < p[3])) return 251;
    let cover = 0;
    for (let py = y; py < y + 20; py++) {
        const off = (py - 473) % 47;
        if (off > 14 && off < 37) cover++;
    }
    return Math.round(252 - cover * 2 - rnd * (cover ? 24 : 3));
}

let svg = '<defs><clipPath id="strokes">';
strokes.forEach(p => svg += `<polygon points="${p}"/>`);
svg += '</clipPath><clipPath id="tabStroke"><polygon points="180,1900 200,1896 450,1896 462,1905 463,1917 452,1928 380,1940 300,1944 230,1936 165,1920 180,1920"/></clipPath></defs><g clip-path="url(#strokes)">';
for (let y = 480; y < 1980; y += 20) {
    for (let x = 60; x < 740; x += 20) {
        const v = shade(x, y);
        svg += `<rect x="${x}" y="${y}" width="20" height="20" fill="rgb(${v},${v},${v})"/>`;
    }
}
svg += '</g><g clip-path="url(#tabStroke)"><rect x="160" y="1890" width="310" height="60" fill="#dbe4df"/><rect x="160" y="1890" width="310" height="10" fill="#f5f8f6"/>';
["#c0d8ca", "#bdd5c7", "#c0d8ca", "#e2eee6", "#b4d1c0", "#b8d4c4", "#accfba", "#cfe0d6", "#bdd5c7", "#c8dccf", "#b4d1c0", "#bdd5c7", "#b4d1c0", "#c0d8ca", "#c8dccf"].forEach((c, i) => {
    svg += `<rect x="${180 + i * 20}" y="1900" width="20" height="20" fill="${c}"/>`;
});
document.getElementById("mosaic").innerHTML = svg + "</g>";
```
